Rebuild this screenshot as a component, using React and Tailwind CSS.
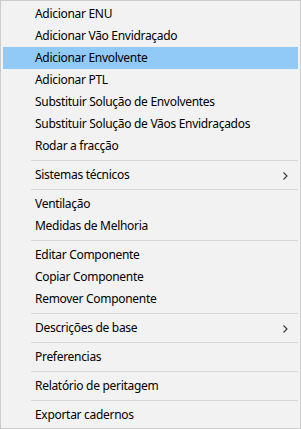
import React from "react";

const groups = [
  [
    { t: "Adicionar ENU" },
    { t: "Adicionar Vão Envidraçado" },
    { t: "Adicionar Envolvente", active: true },
    { t: "Adicionar PTL" },
    { t: "Substituir Solução de Envolventes" },
    { t: "Substituir Solução de Vãos Envidraçados" },
    { t: "Rodar a fracção" },
  ],
  [{ t: "Sistemas técnicos", sub: true }],
  [{ t: "Ventilação" }, { t: "Medidas de Melhoria" }],
  [{ t: "Editar Componente" }, { t: "Copiar Componente" }, { t: "Remover Componente" }],
  [{ t: "Descrições de base", sub: true }],
  [{ t: "Preferencias" }],
  [{ t: "Relatório de peritagem" }],
  [{ t: "Exportar cadernos" }],
];

function Item({ t, active, sub }) {
  return (
    <div
      className={
        "relative flex h-[22px] items-center pl-[32px] text-[12px] tracking-[-0.3px] text-black " +
        (active ? "bg-[#91c9f7]" : "")
      }
    >
      <span className="leading-none">{t}</span>
      {sub && (
        <svg
          className="absolute right-[10px] top-[8px]"
          width="5"
          height="8"
          viewBox="0 0 5 8"
        >
          <path d="M0.5 0.5 L4 4 L0.5 7.5" fill="none" stroke="#333" strokeWidth="1.1" />
        </svg>
      )}
    </div>
  );
}

export default function App() {
  return (
    <div
      className="w-[301px] h-[429px] border border-[#cccccc] bg-[#f2f2f2] p-[2px]"
      style={{ fontFamily: '"Noto Sans", "Open Sans", sans-serif' }}
    >
      {groups.map((g, gi) => (
        <React.Fragment key={gi}>
          {gi > 0 && (
            <div className="flex h-[7px] items-center pl-[28px]">
              <div className="h-px w-full bg-[#d7d7d7]" />
            </div>
          )}
          {g.map((it, i) => (
            <Item key={i} {...it} />
          ))}
        </React.Fragment>
      ))}
    </div>
  );
}
